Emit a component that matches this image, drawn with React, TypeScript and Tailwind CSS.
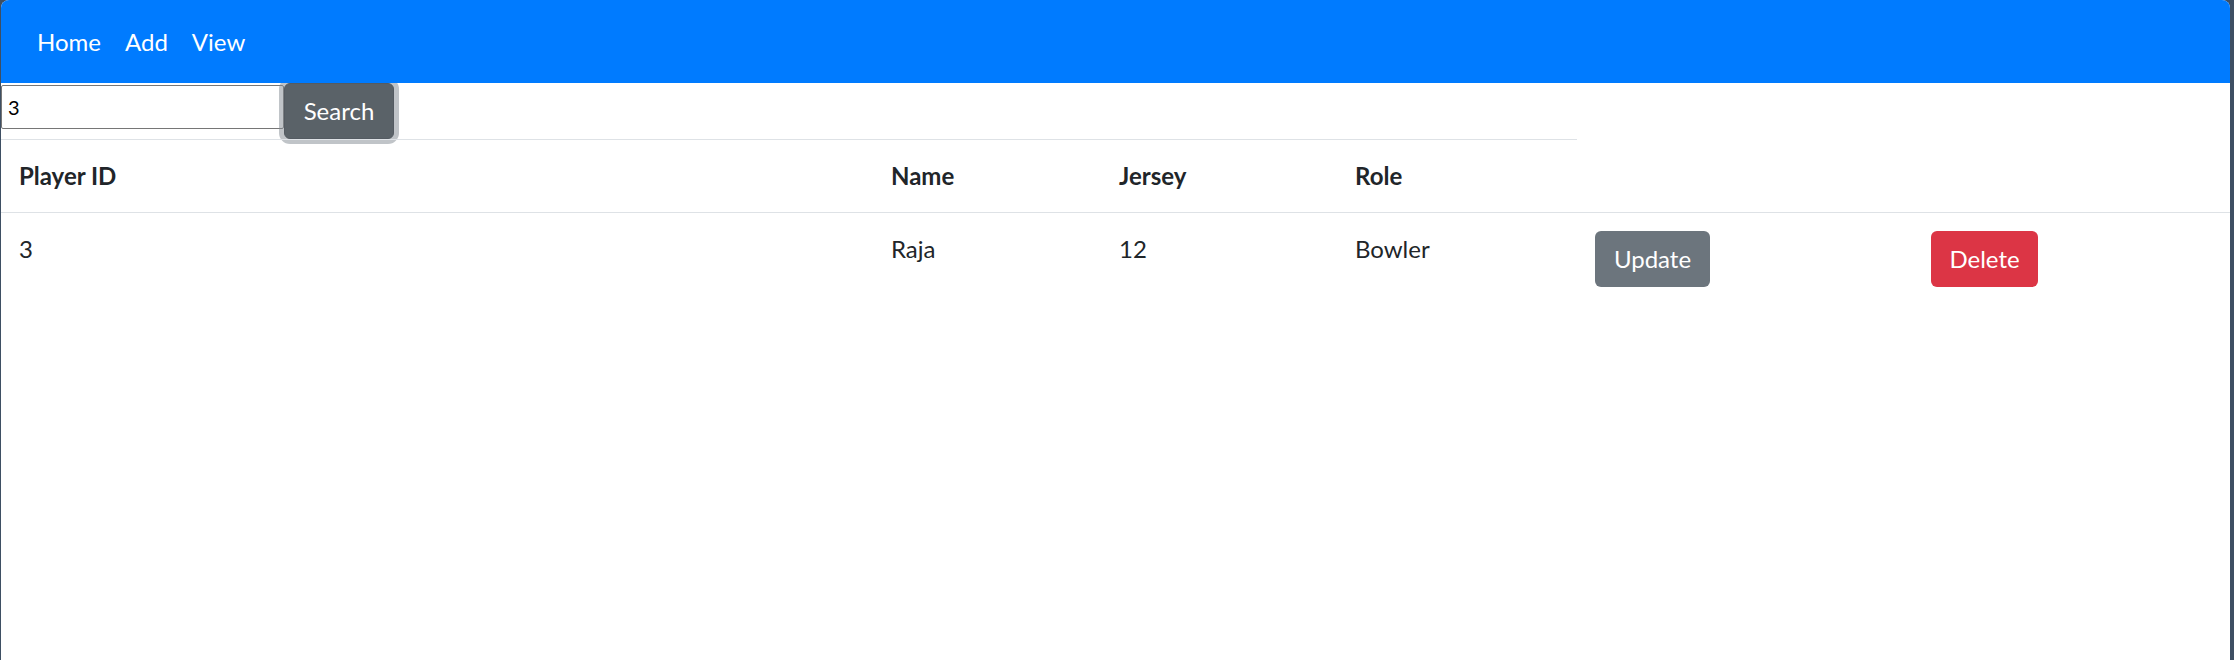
import { useState } from 'react';

type Player = {
  id: number;
  name: string;
  jersey: number;
  role: string;
};

const players: Player[] = [{ id: 3, name: 'Raja', jersey: 12, role: 'Bowler' }];

const headers = ['Player ID', 'Name', 'Jersey', 'Role'];

export default function App() {
  const [query, setQuery] = useState('3');

  return (
    <div className="h-[660px] w-full bg-[#3e4f63] pl-px pr-[4px] font-[Lato,sans-serif] text-[#212529]">
      <div className="h-full bg-white rounded-t-[8px] overflow-hidden">
        {/* Navbar */}
        <nav className="relative z-10 h-[83px] bg-[#007bff] flex items-center px-[24px]">
          {['Home', 'Add', 'View'].map((item) => (
            <a key={item} className="px-[12px] text-[24px] leading-[36px] text-white cursor-pointer">
              {item}
            </a>
          ))}
        </nav>

        {/* Search bar */}
        <div className="flex items-start h-[56px]">
          <input
            value={query}
            onChange={(e) => setQuery(e.target.value)}
            className="mt-[2px] w-[283px] h-[44px] border border-[#767676] rounded-[2px] px-[6px] text-[20px] text-black outline-none font-[Lato,sans-serif]"
          />
          <button className="w-[110px] h-[56px] rounded-[6px] bg-[#5a6268] border border-[#545b62] text-white text-[24px] shadow-[0_0_0_5px_rgba(130,138,145,0.5)]">
            Search
          </button>
        </div>

        {/* Table */}
        <div className="grid grid-cols-[872px_228px_236px_240px_336px_1fr] text-[24px] leading-[36px]">
          {headers.map((h) => (
            <div key={h} className="px-[18px] py-[18px] font-bold border-t border-b border-[#dee2e6]">
              {h}
            </div>
          ))}
          <div className="border-t border-t-transparent border-b border-[#dee2e6]" />
          <div className="border-t border-t-transparent border-b border-[#dee2e6]" />

          {players.map((p) => (
            <div key={p.id} className="contents">
              <div className="p-[18px]">{p.id}</div>
              <div className="p-[18px]">{p.name}</div>
              <div className="p-[18px]">{p.jersey}</div>
              <div className="p-[18px]">{p.role}</div>
              <div className="p-[18px]">
                <button className="w-[115px] h-[56px] rounded-[6px] bg-[#6c757d] text-white text-[24px]">
                  Update
                </button>
              </div>
              <div className="p-[18px]">
                <button className="w-[107px] h-[56px] rounded-[6px] bg-[#dc3545] text-white text-[24px]">
                  Delete
                </button>
              </div>
            </div>
          ))}
        </div>
      </div>
    </div>
  );
}
